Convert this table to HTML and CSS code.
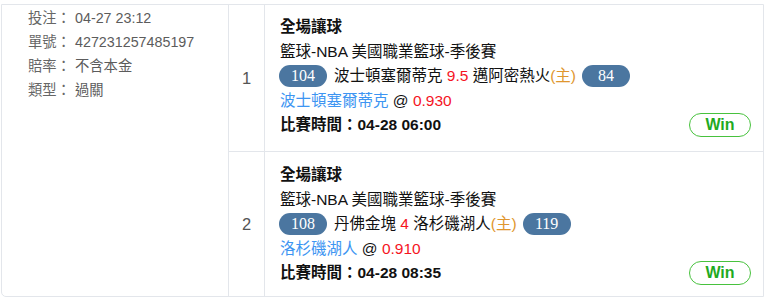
FILE: index.html
```html
<!DOCTYPE html>
<html lang="zh-Hant">
<head>
<meta charset="utf-8">
<link rel="stylesheet" href="styles.css">
</head>
<body>
<div class="bet">
  <div class="info">
    <div class="info-row"><span class="label">投注：</span><span class="value">04-27 23:12</span></div>
    <div class="info-row"><span class="label">單號：</span><span class="value">427231257485197</span></div>
    <div class="info-row"><span class="label">賠率：</span><span class="value">不含本金</span></div>
    <div class="info-row"><span class="label">類型：</span><span class="value">過關</span></div>
  </div>

  <div class="num">1</div>
  <div class="detail">
    <div class="line title">全場讓球</div>
    <div class="line">籃球-NBA 美國職業籃球-季後賽</div>
    <div class="line"><span class="pill">104</span>波士頓塞爾蒂克 <span class="red">9.5</span> 邁阿密熱火<span class="home">(主)</span><span class="pill">84</span></div>
    <div class="line"><span class="blue">波士頓塞爾蒂克</span> @ <span class="red">0.930</span></div>
    <div class="line last"><span class="time">比賽時間：04-28 06:00</span><span class="win">Win</span></div>
  </div>

  <div class="num row2">2</div>
  <div class="detail row2">
    <div class="line title">全場讓球</div>
    <div class="line">籃球-NBA 美國職業籃球-季後賽</div>
    <div class="line"><span class="pill">108</span>丹佛金塊 <span class="red">4</span> 洛杉磯湖人<span class="home">(主)</span><span class="pill">119</span></div>
    <div class="line"><span class="blue">洛杉磯湖人</span> @ <span class="red">0.910</span></div>
    <div class="line last"><span class="time">比賽時間：04-28 08:35</span><span class="win">Win</span></div>
  </div>
</div>
</body>
</html>
```

FILE: styles.css
```css
html, body {
  margin: 0;
  padding: 0;
  background: #ffffff;
}

body {
  font-family: "Liberation Sans", "Noto Sans CJK TC", sans-serif;
  color: #111;
}

.bet {
  margin: 4px 0 0 1px;
  width: 761px;
  border: 1px solid #e3e6eb;
  border-radius: 0 0 0 5px;
  display: grid;
  grid-template-columns: 227px 36px 1fr;
  grid-template-rows: 146px 145px;
}

.info {
  grid-row: 1 / span 2;
  border-right: 1px solid #e3e6eb;
  padding: 1px 0 0 26px;
  font-size: 14.3px;
  color: #666;
}

.info-row {
  height: 24px;
  line-height: 24px;
  display: flex;
}

.label {
  width: 47px;
}

.value {
  color: #5c5c5c;
}

.num {
  border-right: 1px solid #e3e6eb;
  display: flex;
  align-items: center;
  justify-content: center;
  font-size: 16.5px;
  color: #555;
}

.row2 {
  border-top: 1px solid #e3e6eb;
}

.detail {
  padding: 10px 12px 0 15px;
  font-size: 15.5px;
}

.detail.row2 {
  padding-top: 11px;
}

.line {
  height: 24.5px;
  line-height: 24.5px;
  display: flex;
  align-items: center;
  white-space: pre;
  color: #111;
}

.title {
  font-weight: bold;
}

.pill {
  display: inline-block;
  width: 48px;
  height: 22px;
  line-height: 22px;
  border-radius: 11px;
  background: #4b76a0;
  color: #fff;
  text-align: center;
  font-family: "Liberation Serif", serif;
  font-size: 16px;
}

.pill:first-child {
  margin: 0 7px 0 -1px;
}

.home + .pill {
  margin-left: 6px;
}

.red {
  color: #f5141e;
}

.home {
  color: #e0962e;
}

.blue {
  color: #3d95f2;
}

.last {
  justify-content: space-between;
}

.time {
  font-weight: bold;
}

.win {
  width: 60px;
  height: 22px;
  line-height: 22px;
  border: 1px solid #48c23e;
  border-radius: 12px;
  color: #1faa1f;
  font-weight: bold;
  font-size: 16px;
  text-align: center;
}
```
